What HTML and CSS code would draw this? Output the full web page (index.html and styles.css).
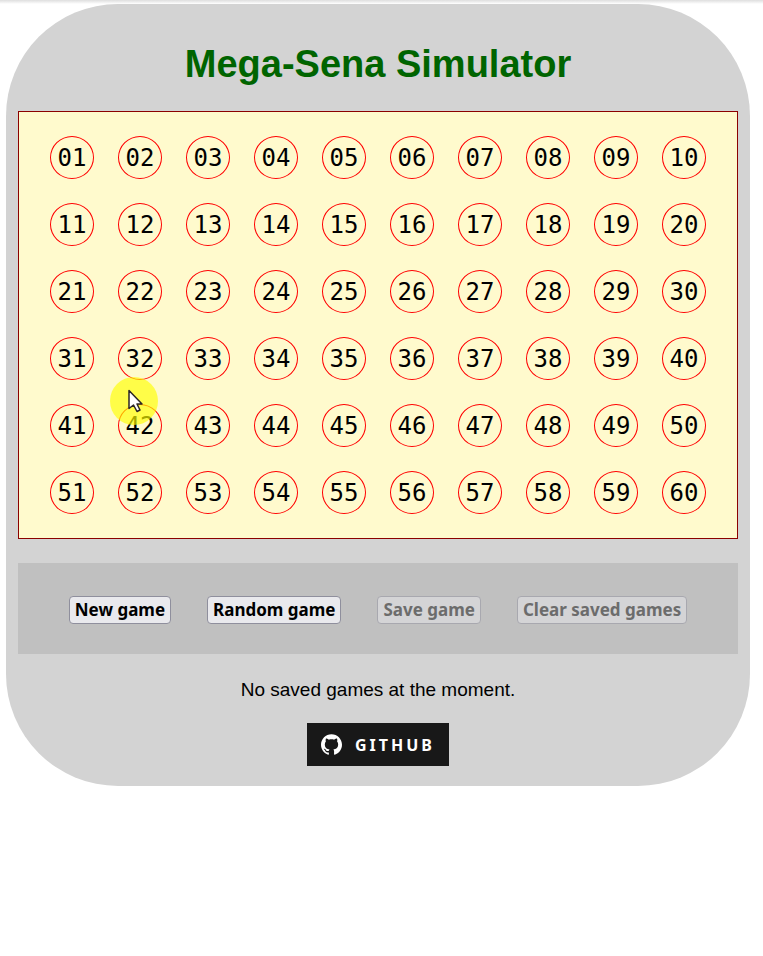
FILE: index.html
```html
<!DOCTYPE html>
<html lang="en">
<head>
<meta charset="utf-8">
<meta name="viewport" content="width=device-width, initial-scale=1">
<title>Mega-Sena Simulator</title>
<link rel="stylesheet" href="styles.css">
</head>
<body>
<main class="card">
  <h1 class="title">Mega-Sena Simulator</h1>
  <section class="board" aria-label="Numbers">
    <button class="number">01</button><button class="number">02</button><button class="number">03</button><button class="number">04</button><button class="number">05</button><button class="number">06</button><button class="number">07</button><button class="number">08</button><button class="number">09</button><button class="number">10</button>
    <button class="number">11</button><button class="number">12</button><button class="number">13</button><button class="number">14</button><button class="number">15</button><button class="number">16</button><button class="number">17</button><button class="number">18</button><button class="number">19</button><button class="number">20</button>
    <button class="number">21</button><button class="number">22</button><button class="number">23</button><button class="number">24</button><button class="number">25</button><button class="number">26</button><button class="number">27</button><button class="number">28</button><button class="number">29</button><button class="number">30</button>
    <button class="number">31</button><button class="number">32</button><button class="number">33</button><button class="number">34</button><button class="number">35</button><button class="number">36</button><button class="number">37</button><button class="number">38</button><button class="number">39</button><button class="number">40</button>
    <button class="number">41</button><button class="number">42</button><button class="number">43</button><button class="number">44</button><button class="number">45</button><button class="number">46</button><button class="number">47</button><button class="number">48</button><button class="number">49</button><button class="number">50</button>
    <button class="number">51</button><button class="number">52</button><button class="number">53</button><button class="number">54</button><button class="number">55</button><button class="number">56</button><button class="number">57</button><button class="number">58</button><button class="number">59</button><button class="number">60</button>
  </section>
  <div class="actions">
    <button class="action">New game</button>
    <button class="action">Random game</button>
    <button class="action" disabled>Save game</button>
    <button class="action" disabled>Clear saved games</button>
  </div>
  <p class="message">No saved games at the moment.</p>
  <a class="github" href="#">
    <svg class="github-icon" viewBox="0 0 24 24" aria-hidden="true"><path fill="#fff" d="M12 .297c-6.63 0-12 5.373-12 12 0 5.303 3.438 9.8 8.205 11.385.6.113.82-.258.82-.577 0-.285-.01-1.04-.015-2.04-3.338.724-4.042-1.61-4.042-1.61C4.422 18.07 3.633 17.7 3.633 17.7c-1.087-.744.084-.729.084-.729 1.205.084 1.838 1.236 1.838 1.236 1.07 1.835 2.809 1.305 3.495.998.108-.776.417-1.305.76-1.605-2.665-.3-5.466-1.332-5.466-5.93 0-1.31.465-2.38 1.235-3.22-.135-.303-.54-1.523.105-3.176 0 0 1.005-.322 3.3 1.23.96-.267 1.98-.399 3-.405 1.02.006 2.04.138 3 .405 2.28-1.552 3.285-1.23 3.285-1.23.645 1.653.24 2.873.12 3.176.765.84 1.23 1.91 1.23 3.22 0 4.61-2.805 5.625-5.475 5.92.42.36.81 1.096.81 2.22 0 1.606-.015 2.896-.015 3.286 0 .315.21.69.825.57C20.565 22.092 24 17.592 24 12.297c0-6.627-5.373-12-12-12"/></svg>
    <span class="github-label">GITHUB</span>
  </a>
</main>
<svg class="pointer" viewBox="0 0 48 48" aria-hidden="true">
  <circle cx="24" cy="24" r="24" fill="#ff0" fill-opacity=".65"/>
  <path d="M19 13.500v18l4.500-3.500 3.500 6.500 3-1.500-3-6h5z" fill="#fff" stroke="#2b2626" stroke-width="1.500" stroke-linejoin="round"/>
</svg>
</body>
</html>
```
FILE: styles.css
```css
* {
  box-sizing: border-box;
}

body {
  margin: 0;
  padding: 4px 13px 0 6px;
  background: #fff linear-gradient(#dedede, #fff) top / 100% 4px no-repeat;
  font-family: "Liberation Sans", Arial, sans-serif;
  color: #000;
}

.card {
  display: flex;
  flex-direction: column;
  padding: 36px 12px 20px;
  border-radius: 112px;
  background: #d3d3d3;
}

.title {
  margin: 0 0 23px;
  font-size: 38px;
  line-height: 48px;
  text-align: center;
  color: #006400;
}

.board {
  display: grid;
  grid-template-columns: repeat(10, 44px);
  grid-auto-rows: 43px;
  gap: 24px;
  justify-content: center;
  padding: 24px 0;
  border: 1px solid #8b0000;
  background: #fffacd;
}

.number {
  padding: 0;
  border: 1px solid #f00;
  border-radius: 50%;
  background: none;
  font: 24px "DejaVu Sans Mono", monospace;
  color: #000;
}

.actions {
  display: flex;
  flex-wrap: wrap;
  justify-content: center;
  gap: 36px;
  margin-top: 24px;
  padding: 33px 0 30px;
  background: #c0c0c0;
}

.action {
  height: 28px;
  padding: 0 5px;
  border: 1px solid #8f8f9d;
  border-radius: 4px;
  background: #e9e9ed;
  font: bold 17px/24px "Noto Sans", sans-serif;
  color: #000;
}

.action:disabled {
  border-color: #a8a8af;
  background: #d4d4d6;
  color: #6c6c6c;
}

.message {
  margin: 24px 0 21px;
  font-size: 19px;
  line-height: 24px;
  text-align: center;
}

.github {
  display: flex;
  align-items: center;
  align-self: center;
  gap: 13px;
  height: 43px;
  padding: 0 14px;
  background: #181818;
  color: #fff;
  text-decoration: none;
}

.github-icon {
  width: 21px;
  height: 21px;
}

.github-label {
  font: bold 16px/22px "Noto Sans", sans-serif;
  letter-spacing: 3px;
}

.pointer {
  position: absolute;
  top: 377px;
  left: 110px;
  width: 48px;
  height: 48px;
  pointer-events: none;
}
```
